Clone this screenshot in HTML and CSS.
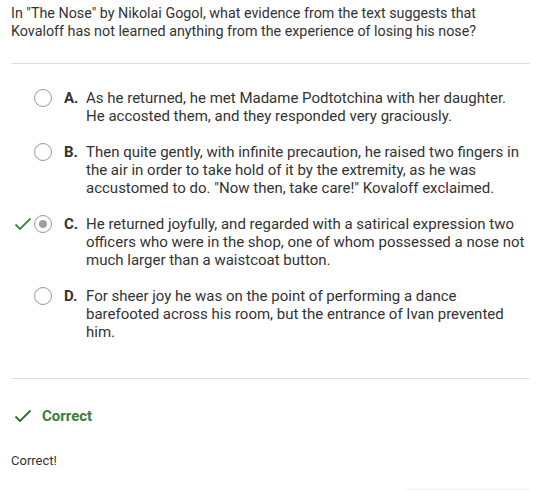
FILE: index.html
```html
<!DOCTYPE html>
<html>
<head>
<meta charset="utf-8">
<link rel="stylesheet" href="styles.css">
</head>
<body>
<div class="page">
  <p class="question">In "The Nose" by Nikolai Gogol, what evidence from the text suggests that Kovaloff has not learned anything from the experience of losing his nose?</p>
  <hr class="divider">
  <ul class="options">
    <li class="option">
      <span class="mark"></span>
      <span class="radio"></span>
      <span class="letter">A.</span>
      <span class="text">As he returned, he met Madame Podtotchina with her daughter. He accosted them, and they responded very graciously.</span>
    </li>
    <li class="option">
      <span class="mark"></span>
      <span class="radio"></span>
      <span class="letter">B.</span>
      <span class="text">Then quite gently, with infinite precaution, he raised two fingers in the air in order to take hold of it by the extremity, as he was accustomed to do. "Now then, take care!" Kovaloff exclaimed.</span>
    </li>
    <li class="option">
      <span class="mark"><svg width="18" height="14" viewBox="0 0 18 14"><path d="M1.5 7.5 L6 12 L16.5 1.5" fill="none" stroke="#3d8b3d" stroke-width="1.8"/></svg></span>
      <span class="radio selected"></span>
      <span class="letter">C.</span>
      <span class="text">He returned joyfully, and regarded with a satirical expression two officers who were in the shop, one of whom possessed a nose not much larger than a waistcoat button.</span>
    </li>
    <li class="option">
      <span class="mark"></span>
      <span class="radio"></span>
      <span class="letter">D.</span>
      <span class="text">For sheer joy he was on the point of performing a dance barefooted across his room, but the entrance of Ivan prevented him.</span>
    </li>
  </ul>
  <hr class="divider">
  <div class="result">
    <svg width="18" height="14" viewBox="0 0 18 14"><path d="M1.5 7.5 L6 12 L16.5 1.5" fill="none" stroke="#2f6b2f" stroke-width="1.8"/></svg>
    <span class="result-label">Correct</span>
  </div>
  <p class="feedback">Correct!</p>
  <div class="footer"><span class="ghost-button"></span></div>
</div>
</body>
</html>
```
FILE: styles.css
```css
html, body {
  margin: 0;
  padding: 0;
  background: #fff;
}
body {
  font-family: Roboto, "Liberation Sans", sans-serif;
  font-size: 15px;
  line-height: 18px;
  color: #333;
}
.page {
  padding: 4px 18px 0 11px;
}
.question {
  margin: 0;
  font-size: 14.3px;
}
.divider {
  border: 0;
  border-top: 1px solid #e0e0e0;
  margin: 23px 0 0 0;
  height: 0;
}
.options {
  list-style: none;
  margin: 25px 0 0 0;
  padding: 0;
  display: flex;
  flex-direction: column;
  gap: 18px;
}
.option {
  display: flex;
  align-items: flex-start;
  padding-right: 4px;
}
.mark {
  width: 23px;
  flex: none;
  display: flex;
  justify-content: flex-start;
  padding-top: 2px;
  padding-left: 3px;
  box-sizing: border-box;
}
.radio {
  flex: none;
  width: 18px;
  height: 18px;
  border: 1.5px solid #9a9a9a;
  border-radius: 50%;
  box-sizing: border-box;
  margin-top: 0;
  position: relative;
}
.radio.selected::after {
  content: "";
  position: absolute;
  left: 3.5px;
  top: 3.5px;
  width: 8px;
  height: 8px;
  border-radius: 50%;
  background: #a0a0a0;
}
.letter {
  flex: none;
  width: 22px;
  margin-left: 12px;
  font-weight: bold;
  color: #333;
}
.text {
  flex: 1;
}
.options + .divider {
  margin-top: 37px;
}
.result {
  display: flex;
  align-items: center;
  margin-top: 28px;
  padding-left: 3px;
  gap: 10px;
}
.result-label {
  font-weight: bold;
  color: #3a7d3a;
}
.feedback {
  margin: 27px 0 0 0;
  font-size: 13px;
}
.footer {
  display: flex;
  justify-content: flex-end;
  margin-top: 20px;
}
.ghost-button {
  width: 125px;
  height: 10px;
  border-radius: 3px;
  box-shadow: 0 -1px 2px rgba(0,0,0,0.06);
}
```
